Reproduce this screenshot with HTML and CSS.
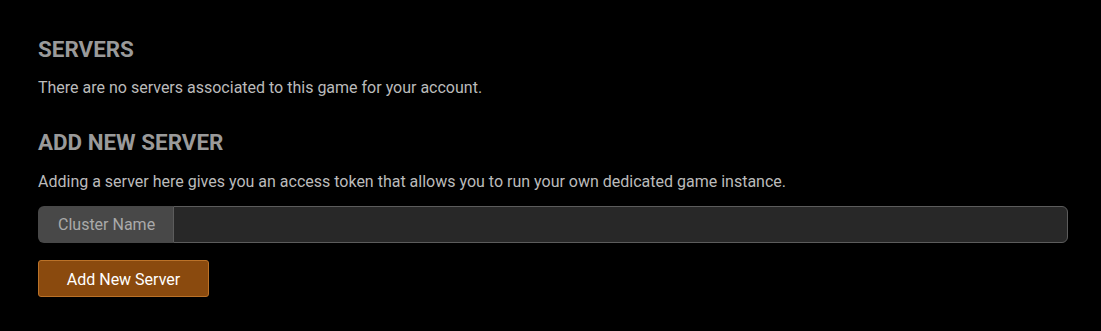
FILE: index.html
```html
<!DOCTYPE html>
<html lang="en">
<head>
  <meta charset="UTF-8">
  <meta name="viewport" content="width=device-width, initial-scale=1.0">
  <title>Servers</title>
  <link rel="stylesheet" href="styles.css">
</head>
<body>
  <div class="page">
    <section class="servers">
      <h2>SERVERS</h2>
      <p>There are no servers associated to this game for your account.</p>
    </section>

    <section class="add-server">
      <h2>ADD NEW SERVER</h2>
      <p>Adding a server here gives you an access token that allows you to run your own dedicated game instance.</p>
      <div class="input-group">
        <span class="input-label">Cluster Name</span>
        <input type="text" id="clusterName">
      </div>
      <button class="btn-add">Add New Server</button>
    </section>
  </div>
</body>
</html>
```

FILE: styles.css
```css
* {
  margin: 0;
  padding: 0;
  box-sizing: border-box;
}

body {
  font-family: Roboto, 'Liberation Sans', sans-serif;
  background-color: #000;
  color: #bbbbbb;
  font-size: 16px;
}

.page {
  padding: 36px 33px 0 38px;
}

h2 {
  font-size: 22.4px;
  font-weight: 700;
  line-height: 26px;
  color: #9a9a9a;
}

p {
  line-height: 24px;
  margin-top: 14px;
}

.add-server {
  margin-top: 29px;
}

.add-server p {
  margin-top: 15px;
}

.input-group {
  display: flex;
  height: 37px;
  margin-top: 12px;
}

.input-label {
  display: flex;
  align-items: center;
  padding: 0 18px 0 20px;
  background-color: #484848;
  color: #aaaaaa;
  border-radius: 6px 0 0 6px;
}

.input-group input {
  flex: 1;
  background-color: #282828;
  border: 1px solid #5c5c5c;
  border-radius: 0 6px 6px 0;
  color: #ddd;
  font: inherit;
  padding: 0 10px;
  outline: none;
}

.btn-add {
  margin-top: 17px;
  width: 171px;
  height: 37px;
  padding-top: 2px;
  background-color: #8a4a0e;
  border: 1px solid #bb7228;
  border-radius: 3px;
  color: #ffffff;
  font: inherit;
  cursor: pointer;
}
```
